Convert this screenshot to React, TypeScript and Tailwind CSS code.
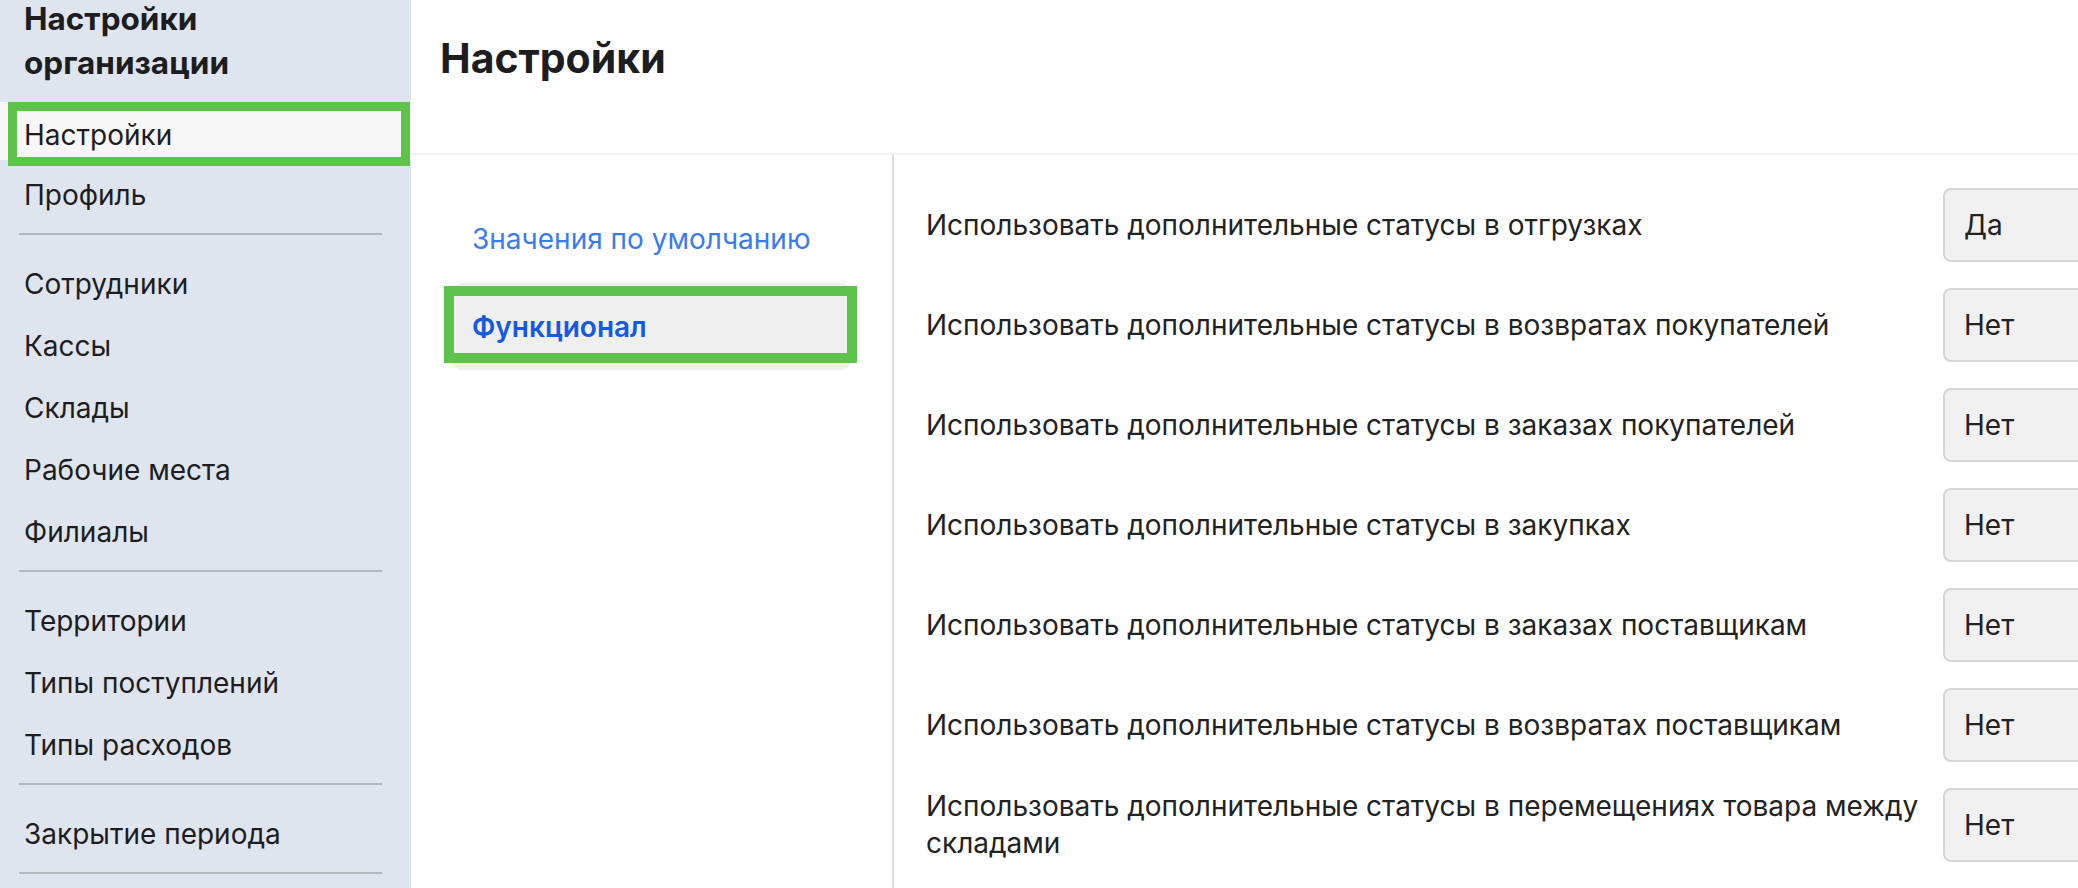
import React from 'react';

type NavEntry = { label: string } | { divider: true };

const NAV: NavEntry[] = [
  { label: 'Профиль' },
  { divider: true },
  { label: 'Сотрудники' },
  { label: 'Кассы' },
  { label: 'Склады' },
  { label: 'Рабочие места' },
  { label: 'Филиалы' },
  { divider: true },
  { label: 'Территории' },
  { label: 'Типы поступлений' },
  { label: 'Типы расходов' },
  { divider: true },
  { label: 'Закрытие периода' },
  { divider: true },
];

const OPTIONS = [
  { label: 'Использовать дополнительные статусы в отгрузках', value: 'Да' },
  { label: 'Использовать дополнительные статусы в возвратах покупателей', value: 'Нет' },
  { label: 'Использовать дополнительные статусы в заказах покупателей', value: 'Нет' },
  { label: 'Использовать дополнительные статусы в закупках', value: 'Нет' },
  { label: 'Использовать дополнительные статусы в заказах поставщикам', value: 'Нет' },
  { label: 'Использовать дополнительные статусы в возвратах поставщикам', value: 'Нет' },
  { label: 'Использовать дополнительные статусы в перемещениях товара между складами', value: 'Нет' },
];

const FONT = "font-['Inter','Noto_Sans',sans-serif]";

function Sidebar() {
  return (
    <aside className="flex w-[411px] shrink-0 flex-col bg-[#dfe5ee] text-[#1d1d1f]">
      <h1 className="px-6 text-[31.5px] font-bold">
        <span className="block leading-[38px]">Настройки</span>
        <span className="block leading-[50px]">организации</span>
      </h1>
      <div className="relative mt-[14px] flex h-[62px] items-center bg-[#f7f7f7] px-6 pt-[7px] text-[28px]">
        Настройки
        {/* highlight frame from the annotated screenshot */}
        <span className="pointer-events-none absolute top-0 right-[1px] -bottom-[6px] left-[8px] border-[9px] border-[#5dc34a]" />
      </div>
      {NAV.map((item, i) =>
        'divider' in item ? (
          <div key={i} className="h-[28px] pt-[11px]">
            <div className="mx-[19px] h-[2px] w-[363px] bg-[#b3b7be]" />
          </div>
        ) : (
          <div key={i} className="flex h-[62px] shrink-0 items-center px-6 pt-[7px] text-[28px]">
            {item.label}
          </div>
        ),
      )}
    </aside>
  );
}

function SubNav() {
  return (
    <nav className="flex w-[481px] shrink-0 flex-col px-[40px] pt-[40px]">
      <a className="flex h-[88px] items-center pl-[21px] text-[28px] text-[#3b7cec]">Значения по умолчанию</a>
      <div className="relative flex h-[87px] items-center rounded-xl bg-[#efefef] pl-[21px] text-[28px] font-semibold text-[#1559e0]">
        Функционал
        <span className="pointer-events-none absolute top-[3px] -right-[5px] bottom-[7px] -left-[7px] border-[10px] border-[#5dc34a]" />
      </div>
    </nav>
  );
}

function OptionRow({ label, value }: { label: string; value: string }) {
  return (
    <div className="flex h-[100px] shrink-0 items-center gap-[17px]">
      <p className="w-[1000px] shrink-0 text-[28px] leading-[37px] text-[#222]">{label}</p>
      <div className="flex h-[74px] w-[220px] shrink-0 items-center rounded-lg border-2 border-[#d6d6d6] bg-[#f1f1f1] pl-[19px] text-[28px] text-[#222]">
        {value}
      </div>
    </div>
  );
}

export default function App() {
  return (
    <div className={`flex h-[888px] w-[2078px] overflow-hidden bg-white ${FONT}`}>
      <Sidebar />
      <main className="flex min-w-0 flex-1 flex-col">
        <header className="flex h-[155px] shrink-0 items-start border-b-2 border-[#f3f3f3] pl-[29px] pt-[30px]">
          <h2 className="text-[41px] font-bold leading-[56px] text-[#1d1d1f]">Настройки</h2>
        </header>
        <div className="flex flex-1">
          <SubNav />
          <section className="flex flex-1 flex-col overflow-hidden border-l-2 border-[#d8dce1] pt-[20px] pl-[32px]">
            {OPTIONS.map((o) => (
              <OptionRow key={o.label} label={o.label} value={o.value} />
            ))}
            <div className="flex h-[100px] shrink-0 items-center gap-[17px]">
              <div className="w-[1000px] shrink-0" />
              <div className="h-[74px] w-[220px] shrink-0 rounded-lg border-2 border-[#d6d6d6] bg-[#f1f1f1]" />
            </div>
          </section>
        </div>
      </main>
    </div>
  );
}
